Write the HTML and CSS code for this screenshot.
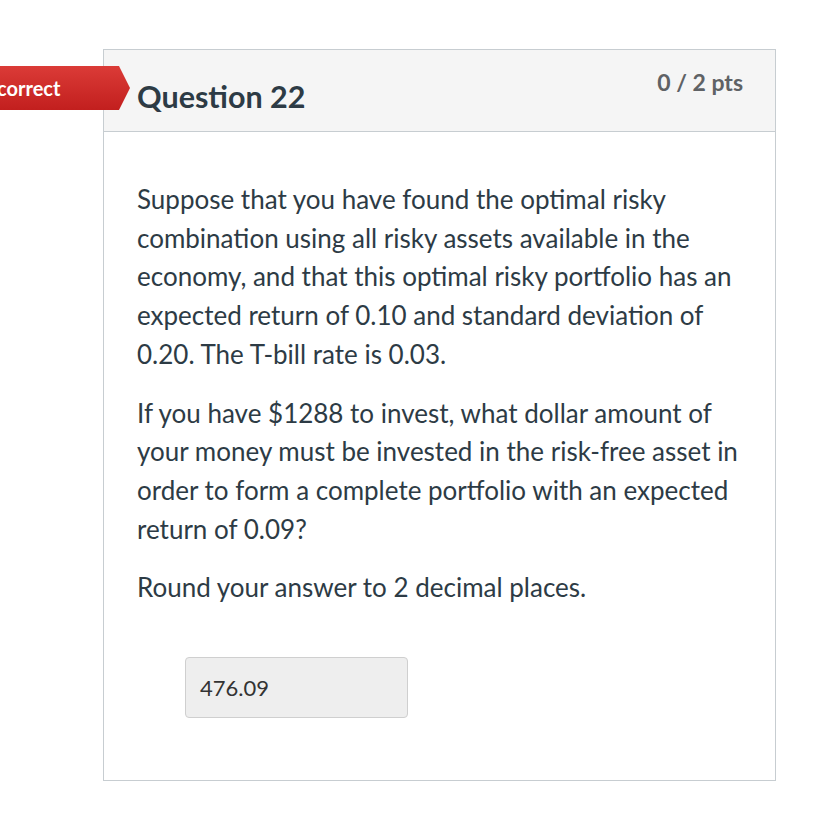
FILE: index.html
```html
<!DOCTYPE html>
<html>
<head>
<meta charset="utf-8">
<link rel="stylesheet" href="styles.css">
</head>
<body>
<div class="page">
  <div class="card">
    <div class="badge"><span class="badge-text">Incorrect</span></div>
    <div class="card-header">
      <h2 class="title">Question 22</h2>
      <span class="pts">0 / 2 pts</span>
    </div>
    <div class="card-body">
      <p>Suppose that you have found the optimal risky combination using all risky assets available in the economy, and that this optimal risky portfolio has an expected return of 0.10 and standard deviation of 0.20. The T-bill rate is 0.03.</p>
      <p>If you have $1288 to invest, what dollar amount of your money must be invested in the risk-free asset in order to form a complete portfolio with an expected return of 0.09?</p>
      <p>Round your answer to 2 decimal places.</p>
      <div class="answer">476.09</div>
    </div>
  </div>
</div>
</body>
</html>
```
FILE: styles.css
```css
html, body {
  margin: 0;
  padding: 0;
  background: #ffffff;
  font-family: Lato, "Open Sans", sans-serif;
  color: #2d3b45;
}
.page {
  padding: 49px 0 0 103px;
  width: 673px;
}
.card {
  position: relative;
  border: 1px solid #c7cdd1;
  background: #fff;
}
.card-header {
  background: #f5f5f5;
  border-bottom: 1px solid #c7cdd1;
  height: 81px;
  display: flex;
  justify-content: space-between;
  align-items: flex-start;
  padding: 0 32px 0 33px;
}
.title {
  margin: 0;
  padding-top: 27px;
  font-size: 30.5px;
  font-weight: 700;
  color: #2d3b45;
  line-height: 38px;
}
.pts {
  padding-top: 18px;
  font-size: 23px;
  font-weight: 700;
  color: #5f6265;
  line-height: 28px;
}
.badge {
  position: absolute;
  left: -104px;
  top: 16px;
  width: 130px;
  height: 44px;
  background: linear-gradient(#db3b37, #c21f1e);
  clip-path: polygon(0 0, 119px 0, 130px 50%, 119px 100%, 0 100%);
  color: #fff;
  font-weight: 700;
  font-size: 20px;
  line-height: 44px;
  overflow: hidden;
  white-space: nowrap;
}
.badge-text {
  display: block;
  margin-left: -20px;
}
.card-body {
  padding: 48px 30px 62px 33px;
  font-size: 26px;
  line-height: 38.7px;
  color: #2d3b45;
}
.card-body p {
  margin: 0 0 20px 0;
}
.answer {
  margin: 50px 0 0 48px;
  width: 223px;
  height: 61px;
  box-sizing: border-box;
  background: #eeeeee;
  border: 1px solid #cfcfcf;
  border-radius: 4px;
  font-size: 22px;
  line-height: 59px;
  padding-left: 14px;
  color: #333;
}
```
